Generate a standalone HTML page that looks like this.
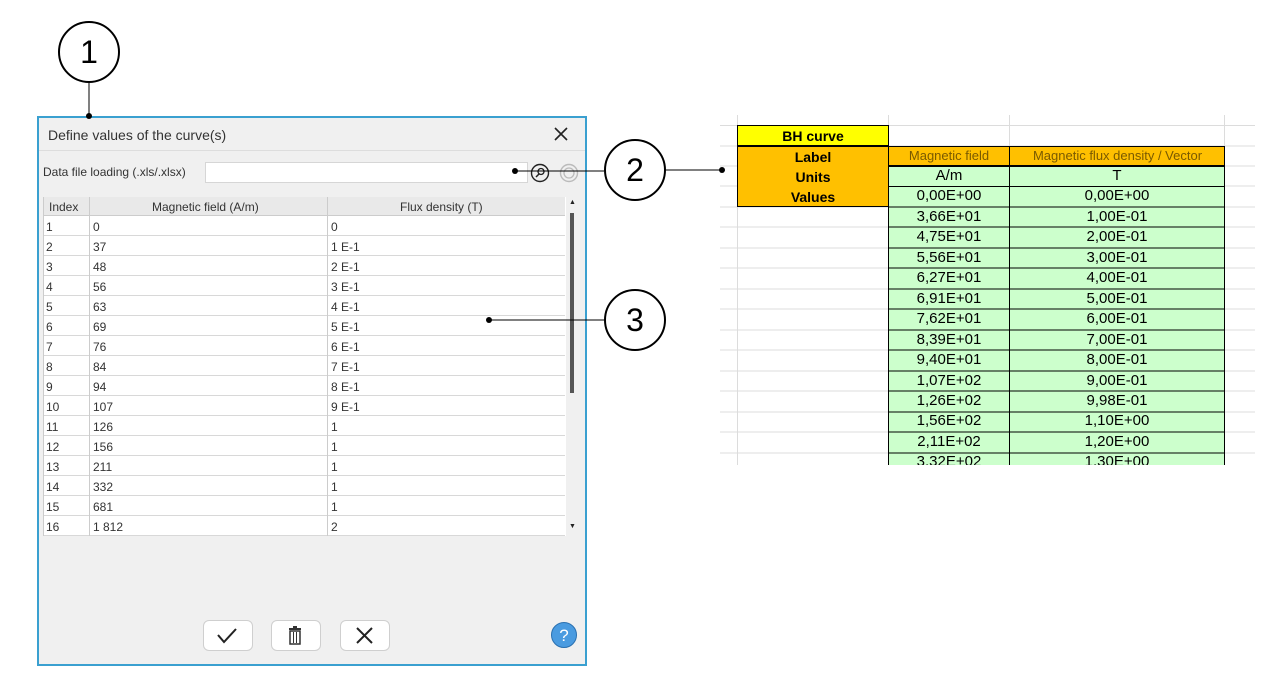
<!DOCTYPE html>
<html><head><meta charset="utf-8"><style>
*{margin:0;padding:0;box-sizing:border-box}
body{width:1276px;height:692px;background:#fff;position:relative;overflow:hidden;font-family:"Liberation Sans",sans-serif}
.a{position:absolute}
.dlg{left:37px;top:116px;width:550px;height:550px;border:2px solid #3aa0d0;background:#f0f0f0}
.tr{position:absolute;left:0;height:20px;width:522px;border-bottom:1px solid #d8d8d8;background:#fff;font-size:12px;color:#333}
.tr span{position:absolute;top:4px}
.btn{position:absolute;top:502px;width:50px;height:31px;border:1px solid #cfcfcf;border-radius:6px;background:#fff}
.ss{position:absolute;height:21px;font-size:14px;color:#000;text-align:center;line-height:20px}
.circ{position:absolute;width:62px;height:62px;border:2px solid #000;border-radius:50%;font-size:32px;text-align:center;line-height:58px;background:#fff}
</style></head><body>

<div class="a" style="left:720px;top:115px;width:535px;height:350px;overflow:hidden">
<svg width="535" height="350" style="position:absolute;left:0;top:0">
<g stroke="#dcdcdc" stroke-width="1">
<line x1="0" y1="10.5" x2="535" y2="10.5"/>
<line x1="0" y1="31" x2="535" y2="31"/><line x1="0" y1="51" x2="535" y2="51"/><line x1="0" y1="71" x2="535" y2="71"/>
<line x1="0" y1="92" x2="535" y2="92"/><line x1="0" y1="112" x2="535" y2="112"/><line x1="0" y1="133" x2="535" y2="133"/>
<line x1="0" y1="153" x2="535" y2="153"/><line x1="0" y1="174" x2="535" y2="174"/><line x1="0" y1="194" x2="535" y2="194"/>
<line x1="0" y1="215" x2="535" y2="215"/><line x1="0" y1="235" x2="535" y2="235"/><line x1="0" y1="256" x2="535" y2="256"/>
<line x1="0" y1="276" x2="535" y2="276"/><line x1="0" y1="297" x2="535" y2="297"/><line x1="0" y1="317" x2="535" y2="317"/>
<line x1="0" y1="338" x2="535" y2="338"/>
<line x1="17.5" y1="0" x2="17.5" y2="350"/><line x1="168.5" y1="0" x2="168.5" y2="350"/><line x1="289.5" y1="0" x2="289.5" y2="350"/><line x1="504.5" y1="0" x2="504.5" y2="350"/>
</g></svg>
<div class="ss" style="left:17px;top:10px;width:152px;background:#ffff00;border:1px solid #000;font-weight:bold">BH curve</div>
<div class="ss" style="left:17px;top:31px;width:152px;height:61px;background:#ffc000;border:1px solid #000;font-weight:bold;line-height:20px">Label<br>Units<br>Values</div>
<div class="ss" style="left:168px;top:31px;width:337px;height:20px;background:#ffc000;border:1px solid #000"></div>
<div class="ss" style="left:168px;top:31px;width:122px;color:#7a5a00;font-size:13px">Magnetic field</div>
<div class="ss" style="left:289px;top:31px;width:216px;color:#7a5a00;font-size:13px;border-left:1px solid #000">Magnetic flux density / Vector</div>
<div class="a" style="left:168px;top:51px;width:337px;height:310px;background:#ccffcc;border:1px solid #000"></div>
<svg width="535" height="350" style="position:absolute;left:0;top:0"><g stroke="#000" stroke-width="1">
<line x1="289.5" y1="31" x2="289.5" y2="350"/>
<line x1="168" y1="71.5" x2="505" y2="71.5"/><line x1="168" y1="92" x2="505" y2="92"/><line x1="168" y1="112" x2="505" y2="112"/><line x1="168" y1="133" x2="505" y2="133"/><line x1="168" y1="153" x2="505" y2="153"/><line x1="168" y1="174" x2="505" y2="174"/><line x1="168" y1="194" x2="505" y2="194"/><line x1="168" y1="215" x2="505" y2="215"/><line x1="168" y1="235" x2="505" y2="235"/><line x1="168" y1="256" x2="505" y2="256"/><line x1="168" y1="276" x2="505" y2="276"/><line x1="168" y1="297" x2="505" y2="297"/><line x1="168" y1="317" x2="505" y2="317"/><line x1="168" y1="338" x2="505" y2="338"/>
</g></svg>
<div class="a" style="left:168px;top:51px;width:122px;font-size:15px;text-align:center;line-height:20.45px">A/m<br>0,00E+00<br>3,66E+01<br>4,75E+01<br>5,56E+01<br>6,27E+01<br>6,91E+01<br>7,62E+01<br>8,39E+01<br>9,40E+01<br>1,07E+02<br>1,26E+02<br>1,56E+02<br>2,11E+02<br>3,32E+02</div>
<div class="a" style="left:289px;top:51px;width:216px;font-size:15px;text-align:center;line-height:20.45px">T<br>0,00E+00<br>1,00E-01<br>2,00E-01<br>3,00E-01<br>4,00E-01<br>5,00E-01<br>6,00E-01<br>7,00E-01<br>8,00E-01<br>9,00E-01<br>9,98E-01<br>1,10E+00<br>1,20E+00<br>1,30E+00</div>
</div>

<div class="a dlg">
<div class="a" style="left:9px;top:9px;font-size:14px;color:#333">Define values of the curve(s)</div>
<svg class="a" style="left:514px;top:8px" width="16" height="16"><path d="M2 2 L14 14 M14 2 L2 14" stroke="#222" stroke-width="1.6"/></svg>
<div class="a" style="left:0;top:32px;width:546px;border-top:1px solid #ddd"></div>
<div class="a" style="left:4px;top:47px;font-size:12px;color:#333">Data file loading (.xls/.xlsx)</div>
<div class="a" style="left:166px;top:44px;width:323px;height:21px;background:#fff;border:1px solid #d6d6d6"></div>
<svg class="a" style="left:490px;top:44px" width="24" height="22"><circle cx="11" cy="11" r="8.5" fill="none" stroke="#222" stroke-width="1.4"/><circle cx="12" cy="9.5" r="3" fill="none" stroke="#222" stroke-width="1.3"/><line x1="10" y1="12" x2="7" y2="15" stroke="#222" stroke-width="1.5"/></svg>
<svg class="a" style="left:519px;top:44px" width="24" height="22"><circle cx="11" cy="11" r="8.5" fill="none" stroke="#bbb" stroke-width="1.4"/><circle cx="11" cy="11" r="5" fill="none" stroke="#bbb" stroke-width="1.3"/></svg>
<div class="a" style="left:4px;top:79px;width:523px;height:339px;background:#fff;overflow:hidden">
<div class="tr" style="top:0;height:19px;background:#e9e9e9;border-bottom:1px solid #ccc"><span style="left:6px;top:3px">Index</span><span style="left:109px;top:3px">Magnetic field (A/m)</span><span style="left:357px;top:3px">Flux density (T)</span></div>
<div class="tr" style="top:19px"><span style="left:3px">1</span><span style="left:50px">0</span><span style="left:288px">0</span></div>
<div class="tr" style="top:39px"><span style="left:3px">2</span><span style="left:50px">37</span><span style="left:288px">1 E-1</span></div>
<div class="tr" style="top:59px"><span style="left:3px">3</span><span style="left:50px">48</span><span style="left:288px">2 E-1</span></div>
<div class="tr" style="top:79px"><span style="left:3px">4</span><span style="left:50px">56</span><span style="left:288px">3 E-1</span></div>
<div class="tr" style="top:99px"><span style="left:3px">5</span><span style="left:50px">63</span><span style="left:288px">4 E-1</span></div>
<div class="tr" style="top:119px"><span style="left:3px">6</span><span style="left:50px">69</span><span style="left:288px">5 E-1</span></div>
<div class="tr" style="top:139px"><span style="left:3px">7</span><span style="left:50px">76</span><span style="left:288px">6 E-1</span></div>
<div class="tr" style="top:159px"><span style="left:3px">8</span><span style="left:50px">84</span><span style="left:288px">7 E-1</span></div>
<div class="tr" style="top:179px"><span style="left:3px">9</span><span style="left:50px">94</span><span style="left:288px">8 E-1</span></div>
<div class="tr" style="top:199px"><span style="left:3px">10</span><span style="left:50px">107</span><span style="left:288px">9 E-1</span></div>
<div class="tr" style="top:219px"><span style="left:3px">11</span><span style="left:50px">126</span><span style="left:288px">1</span></div>
<div class="tr" style="top:239px"><span style="left:3px">12</span><span style="left:50px">156</span><span style="left:288px">1</span></div>
<div class="tr" style="top:259px"><span style="left:3px">13</span><span style="left:50px">211</span><span style="left:288px">1</span></div>
<div class="tr" style="top:279px"><span style="left:3px">14</span><span style="left:50px">332</span><span style="left:288px">1</span></div>
<div class="tr" style="top:299px"><span style="left:3px">15</span><span style="left:50px">681</span><span style="left:288px">1</span></div>
<div class="tr" style="top:319px"><span style="left:3px">16</span><span style="left:50px">1 812</span><span style="left:288px">2</span></div>
<div class="a" style="left:46px;top:0;height:339px;border-left:1px solid #ccc"></div>
<div class="a" style="left:284px;top:0;height:339px;border-left:1px solid #ccc"></div>
<div class="a" style="left:0;top:0;height:339px;border-left:1px solid #ccc"></div>
</div>
<div class="a" style="left:527px;top:79px;width:12px;height:339px;background:#f0f0f0"></div>
<div class="a" style="left:530px;top:81px;font-size:7px;color:#222">▲</div>
<div class="a" style="left:531px;top:95px;width:4px;height:180px;background:#555"></div>
<div class="a" style="left:530px;top:405px;font-size:7px;color:#222">▼</div>
<div class="btn" style="left:164px"><svg width="48" height="29"><path d="M14 14 L20 21 L32 8" fill="none" stroke="#222" stroke-width="2"/></svg></div>
<div class="btn" style="left:232px"><svg width="48" height="29"><rect x="17" y="7" width="12" height="2" fill="#333"/><rect x="21" y="5" width="4" height="2" fill="#333"/><rect x="18" y="10" width="10" height="13" fill="none" stroke="#333" stroke-width="1.5"/><line x1="21.5" y1="11" x2="21.5" y2="22" stroke="#333"/><line x1="24.5" y1="11" x2="24.5" y2="22" stroke="#333"/></svg></div>
<div class="btn" style="left:301px"><svg width="48" height="29"><path d="M16 7 L31 22 M31 7 L16 22" stroke="#222" stroke-width="2"/></svg></div>
<svg class="a" style="left:511px;top:503px" width="28" height="28"><circle cx="14" cy="14" r="12.5" fill="#4a9be0" stroke="#2a70b0"/><text x="14" y="20" font-size="17" text-anchor="middle" fill="#fff" font-family="Liberation Sans">?</text></svg>
</div>

<svg class="a" style="left:0;top:0" width="1276" height="692">
<line x1="89" y1="82" x2="89" y2="116" stroke="#000"/><circle cx="89" cy="116" r="3"/>
<line x1="515" y1="171" x2="604" y2="171" stroke="#000"/><circle cx="515" cy="171" r="3"/>
<line x1="666" y1="170" x2="722" y2="170" stroke="#000"/><circle cx="722" cy="170" r="3"/>
<line x1="489" y1="320" x2="604" y2="320" stroke="#000"/><circle cx="489" cy="320" r="3"/>
</svg>
<div class="circ" style="left:58px;top:21px">1</div>
<div class="circ" style="left:604px;top:139px">2</div>
<div class="circ" style="left:604px;top:289px">3</div>
</body></html>
